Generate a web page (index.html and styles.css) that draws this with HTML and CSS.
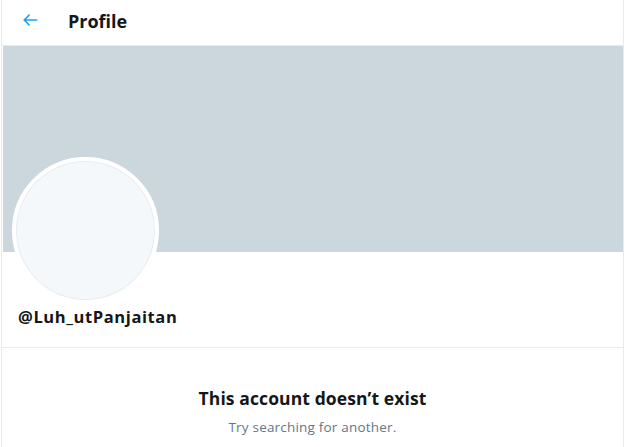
FILE: index.html
```html
<!DOCTYPE html>
<html>
<head>
<meta charset="utf-8">
<link rel="stylesheet" href="styles.css">
</head>
<body>
<div class="column">
  <header class="topbar">
    <svg class="back" viewBox="0 0 24 24" width="20" height="20"><path d="M20 11H7.414l4.293-4.293a1 1 0 0 0-1.414-1.414l-6 6a1 1 0 0 0 0 1.414l6 6a1 1 0 0 0 1.414-1.414L7.414 13H20a1 1 0 1 0 0-2z"/></svg>
    <h1 class="title">Profile</h1>
  </header>
  <section class="profile">
    <div class="banner"></div>
    <div class="info">
      <div class="avatar"></div>
      <div class="handle">@Luh_utPanjaitan</div>
    </div>
  </section>
  <section class="empty">
    <div class="empty-title">This account doesn’t exist</div>
    <div class="empty-sub">Try searching for another.</div>
  </section>
</div>
</body>
</html>
```
FILE: styles.css
```css
* { box-sizing: border-box; }
html, body { margin: 0; padding: 0; background: #fff; }
body { font-family: "Open Sans", "Noto Sans", sans-serif; color: #14171a; }
.column {
  width: 623px;
  margin-left: 1px;
  height: 447px;
  border-left: 1px solid #e6ecf0;
  border-right: 1px solid #e6ecf0;
}
.topbar {
  height: 46px;
  display: flex;
  align-items: center;
  padding-left: 19px;
  border-bottom: 1px solid #e6ecf0;
  margin-left: -1px;
}
.back { fill: #1da1f2; flex: none; margin-top: -6px; }
.title {
  margin: -3px 0 0 28px;
  font-size: 18px;
  font-weight: 700;
}
.profile { border-bottom: 1px solid #e6ecf0; }
.banner { height: 206px; background: #ccd6dd; margin-left: 1px; }
.info { padding: 0 0 20px 10px; }
.avatar {
  width: 147px;
  height: 147px;
  border-radius: 50%;
  background: #f5f8fa;
  border: 4px solid #fff;
  box-shadow: 0 0 0 1px #e6ecf0 inset;
  margin-top: -95px;
  position: relative;
}
.handle {
  margin: 3px 0 0 6px;
  font-size: 16.5px;
  letter-spacing: 0.6px;
  font-weight: 700;
  line-height: 20px;
}
.empty { text-align: center; padding-top: 38px; }
.empty-title { font-size: 17.5px; letter-spacing: 0.1px; font-weight: 700; line-height: 24px; }
.empty-sub { font-size: 13.5px; letter-spacing: 0.2px; color: #657786; margin-top: 8px; line-height: 18px; }
```
